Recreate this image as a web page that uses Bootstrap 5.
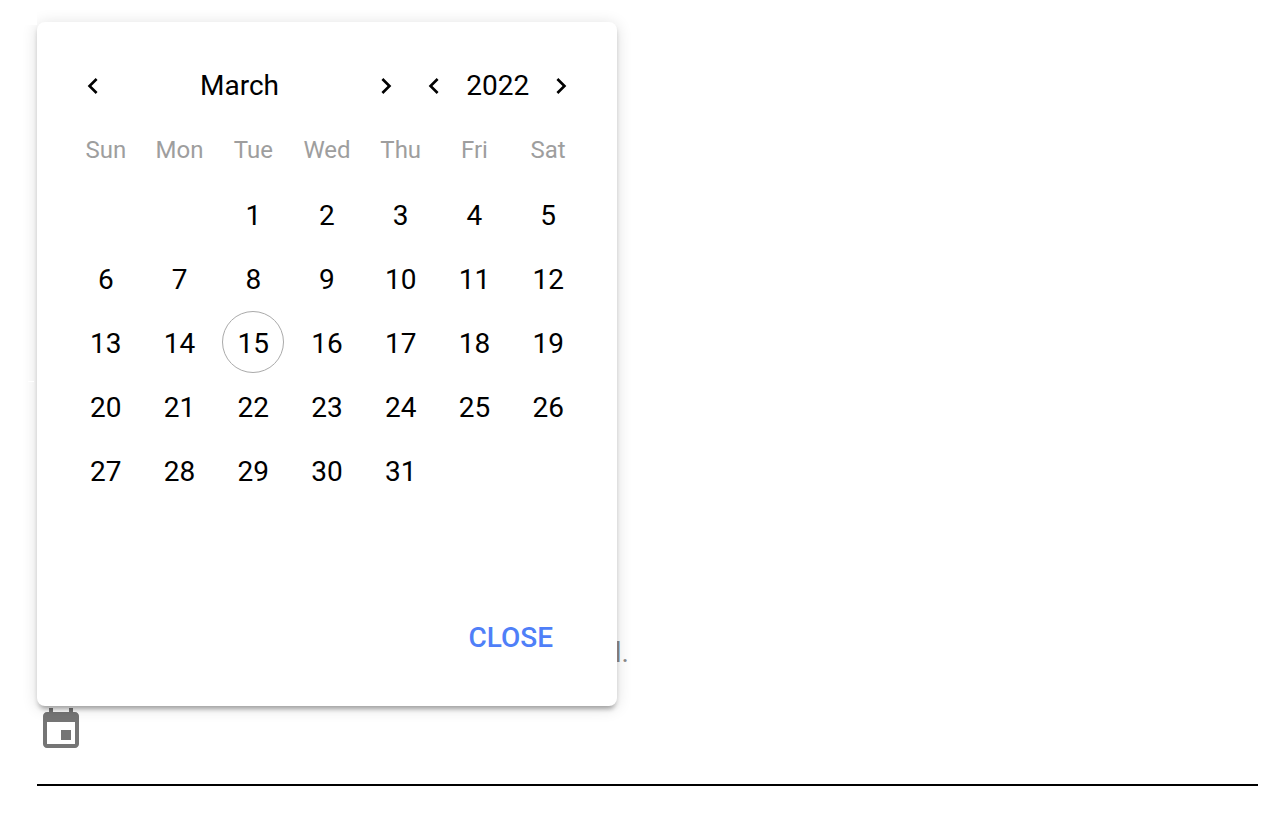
<!DOCTYPE html>
<html lang="en">
<head>
<meta charset="utf-8">
<title>Date picker</title>
<link href="https://cdn.jsdelivr.net/npm/bootstrap@5.3.0/dist/css/bootstrap.min.css" rel="stylesheet">
<style>
body{font-family:Roboto,sans-serif;font-size:28px;line-height:32px;color:#000;background:#fff}
.page-area{width:1221px;height:764px;margin:22px 0 0 37px;border-bottom:2px solid #000}
.picker{width:580px;height:684px;border:0;border-radius:8px;z-index:2;padding:0 32px;
box-shadow:0 4px 4px rgba(0,0,0,.14),0 2px 16px rgba(0,0,0,.14),0 6px 4px -4px rgba(0,0,0,.2)}
.picker::before{content:"";position:absolute;left:-17px;top:-14px;width:17px;height:17px;background:#fff}
.picker::after{content:"";position:absolute;left:-9px;top:359px;width:6px;height:1px;background:#fff}
.picker-head{height:128px}
.month-nav{width:341px;padding-left:8px;padding-right:8px}
.year-nav{width:175px;padding-left:8px;padding-right:7.6px}
.nav-btn{padding:0;line-height:0;border:0;background:none;color:#000}
.nav-btn svg{width:32px;height:32px;fill:currentColor}
.days{display:grid;grid-template-columns:repeat(7,1fr);text-align:center}
.weekdays{height:34px;font-size:24px;line-height:33px;color:#9e9e9e;margin-top:-16px}
.dates{grid-auto-rows:64px;line-height:64px;margin-top:16px}
.first-day{grid-column:3}
.today{position:relative}
.today::before{content:"";position:absolute;left:6px;top:-1px;width:62px;height:62px;border:1px solid #aaa;border-radius:50%}
.close-btn{color:#4f7ff8;font-size:28px;line-height:32px;font-weight:500;padding:0;border:0}
.picker-foot{right:64px;bottom:52px}
.hint{left:576px;top:615px;color:#8a8a8a;z-index:1;width:16px;text-align:right}
.calendar-icon{width:48px;height:48px;fill:#757575;z-index:3}
</style>
<script src="https://cdn.jsdelivr.net/npm/bootstrap@5.3.0/dist/js/bootstrap.bundle.min.js"></script>
</head>
<body>
<main class="page-area position-relative">
<section class="card picker">
  <header class="picker-head d-flex align-items-center">
    <div class="month-nav d-flex align-items-center justify-content-between">
      <button class="nav-btn" aria-label="Previous month"><svg viewBox="0 0 24 24"><path d="M15.41 7.41 14 6l-6 6 6 6 1.41-1.41L10.83 12z"/></svg></button>
      <span>March</span>
      <button class="nav-btn" aria-label="Next month"><svg viewBox="0 0 24 24"><path d="M10 6 8.59 7.41 13.17 12l-4.58 4.59L10 18l6-6z"/></svg></button>
    </div>
    <div class="year-nav d-flex align-items-center justify-content-between">
      <button class="nav-btn" aria-label="Previous year"><svg viewBox="0 0 24 24"><path d="M15.41 7.41 14 6l-6 6 6 6 1.41-1.41L10.83 12z"/></svg></button>
      <span>2022</span>
      <button class="nav-btn" aria-label="Next year"><svg viewBox="0 0 24 24"><path d="M10 6 8.59 7.41 13.17 12l-4.58 4.59L10 18l6-6z"/></svg></button>
    </div>
  </header>
  <div class="days weekdays"><span>Sun</span><span>Mon</span><span>Tue</span><span>Wed</span><span>Thu</span><span>Fri</span><span>Sat</span></div>
  <div class="days dates">
    <span class="first-day">1</span><span>2</span><span>3</span><span>4</span><span>5</span>
    <span>6</span><span>7</span><span>8</span><span>9</span><span>10</span><span>11</span><span>12</span>
    <span>13</span><span>14</span><span class="today">15</span><span>16</span><span>17</span><span>18</span><span>19</span>
    <span>20</span><span>21</span><span>22</span><span>23</span><span>24</span><span>25</span><span>26</span>
    <span>27</span><span>28</span><span>29</span><span>30</span><span>31</span>
  </div>
  <footer class="picker-foot position-absolute"><button class="btn close-btn">CLOSE</button></footer>
</section>
<span class="hint position-absolute">l.</span>
<svg class="calendar-icon d-block" viewBox="0 0 24 24"><path d="M17 12h-5v5h5v-5zM16 1v2H8V1H6v2H5c-1.11 0-1.99.9-1.99 2L3 19c0 1.1.89 2 2 2h14c1.1 0 2-.9 2-2V5c0-1.1-.9-2-2-2h-1V1h-2zm3 18H5V8h14v11z"/></svg>
</main>
</body>
</html>
